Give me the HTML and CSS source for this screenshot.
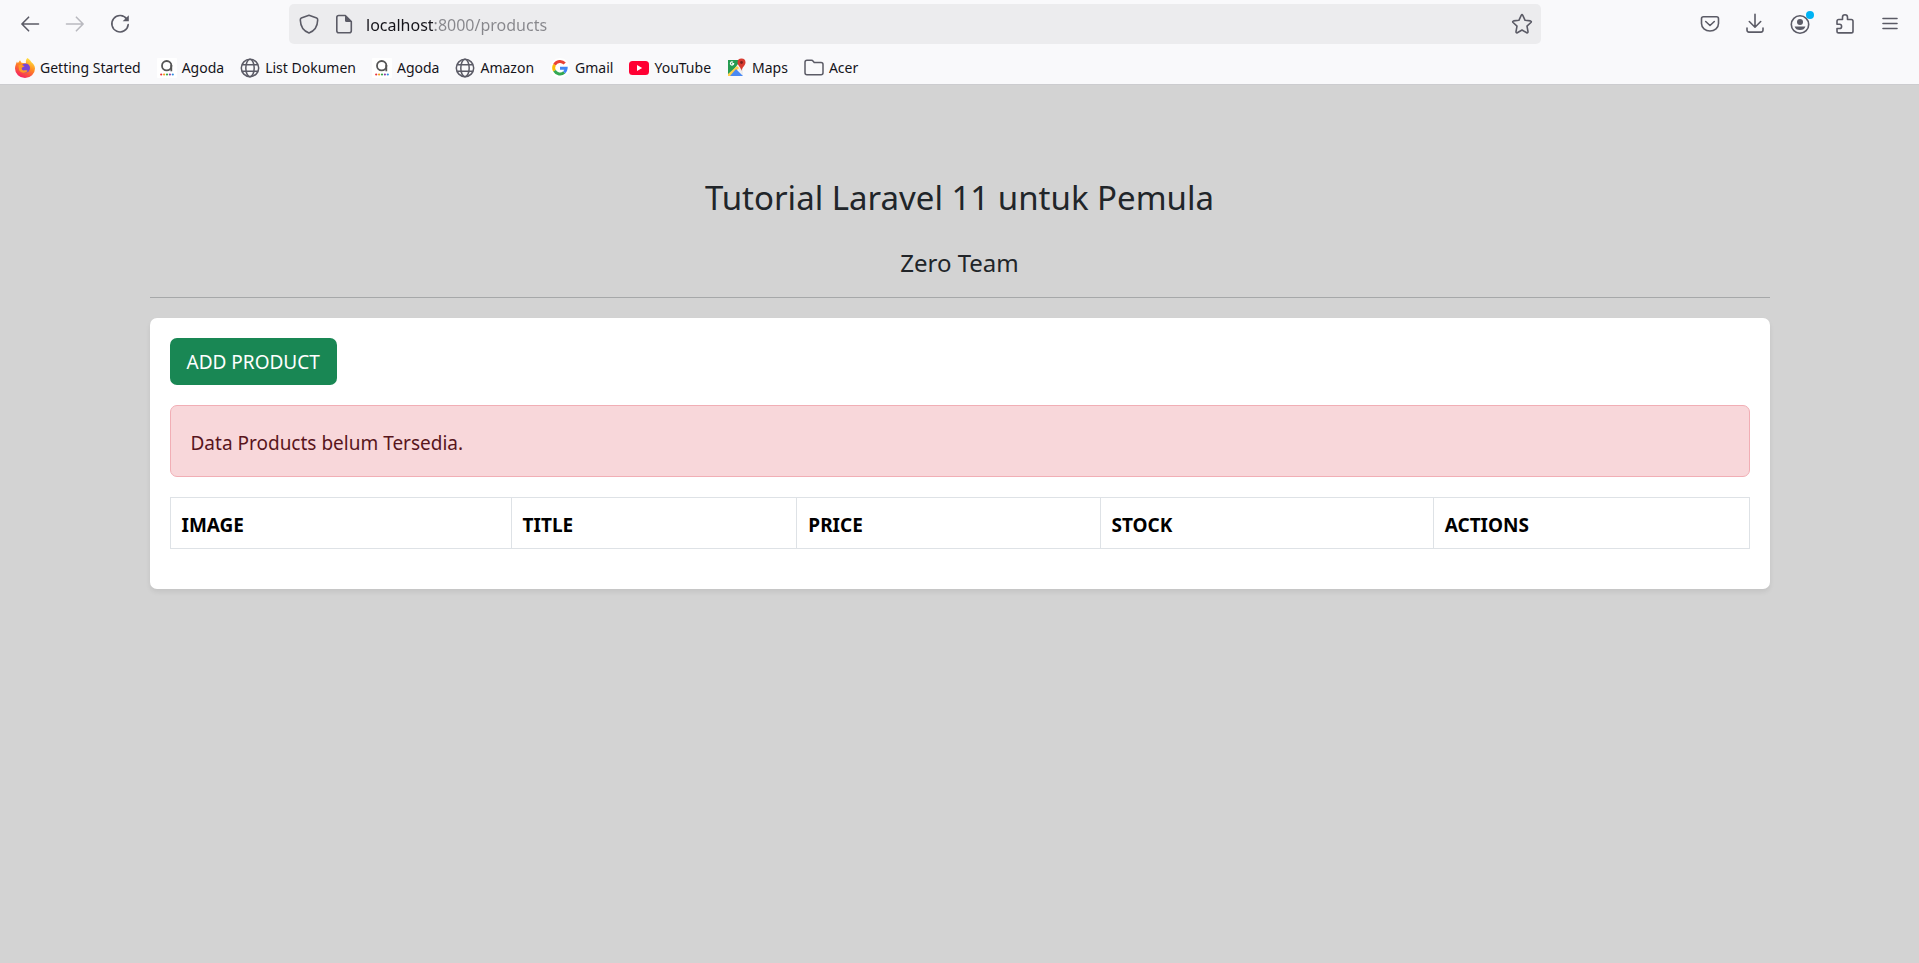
FILE: index.html
```html
<!DOCTYPE html>
<html lang="id">
<head>
<meta charset="utf-8">
<title>Data Products</title>
<link rel="stylesheet" href="styles.css">
</head>
<body>
<svg class="defs" aria-hidden="true">
  <symbol id="globe" viewBox="0 0 20 20"><g fill="none" stroke="#5b5b66" stroke-width="1.5"><circle cx="10" cy="10" r="8.7"/><ellipse cx="10" cy="10" rx="4.2" ry="8.7"/><path d="M2 6.7h16M2 13.3h16"/></g></symbol>
  <symbol id="agoda" viewBox="0 0 20 20"><rect width="20" height="20" rx="1" fill="#fff"/><circle cx="9.7" cy="7.700" r="4.7" fill="none" stroke="#555" stroke-width="1.8"/><path d="M14.300 7v6.300" stroke="#555" stroke-width="1.8"/><circle cx="4.2" cy="16.5" r="1.1" fill="#e8323c"/><circle cx="7.1" cy="16.5" r="1.1" fill="#f5a11c"/><circle cx="10" cy="16.5" r="1.1" fill="#37a84a"/><circle cx="12.9" cy="16.5" r="1.1" fill="#8b3fa5"/><circle cx="15.8" cy="16.5" r="1.1" fill="#2f8de0"/></symbol>
</svg>
<header class="chrome">
  <div class="toolbar">
    <nav class="group" aria-label="Navigation">
      <button class="tool" aria-label="Back"><svg viewBox="0 0 20 20"><path d="M18.5 10H2M8.6 3.2 1.9 10l6.7 6.8"/></svg></button>
      <button class="tool faded" aria-label="Forward"><svg viewBox="0 0 20 20"><path d="M1.5 10H18M11.4 3.2l6.7 6.8-6.7 6.8"/></svg></button>
      <button class="tool" aria-label="Reload"><svg viewBox="0 0 20 20"><path d="M16.9 5.2A8.2 8.2 0 1 0 18.2 10.6"/><path class="solid" d="M18.8 1.2v6.1h-6.1z"/></svg></button>
    </nav>
    <form class="urlbar">
      <button type="button" class="bar-icon" aria-label="Tracking protection"><svg viewBox="0 0 20 20"><path d="M10 1.3 17.7 4c1 .4 1 1 1 2C18.500 12 15.500 17 10 19 4.500 17 1.500 12 1.300 6c0-1 0-1.600 1-2z"/></svg></button>
      <button type="button" class="bar-icon" aria-label="Site information"><svg viewBox="0 0 20 20"><path d="M4.500 1.500h6.800l6 6v9.200q0 2-2 2H4.800q-2 0-2-2V3.500q0-2 2-2z"/><path class="solid" d="M11 1v5.500q0 1.500 1.500 1.500H18z"/></svg></button>
      <input class="address" type="text" aria-label="Address" value="localhost:8000/products">
      <button type="button" class="bar-icon" aria-label="Bookmark this page"><svg viewBox="0 0 20 20"><path d="M9.200 1.300q.8-1.300 1.600 0l2.300 5 5.300.6q1.500.4.5 1.600l-3.900 3.700 1 5.500q0 1.500-1.300 1L10 16l-4.700 2.700q-1.300.5-1.300-1l1-5.500L1.100 8.500q-1-1.200.5-1.600l5.300-.6z"/></svg></button>
    </form>
    <div class="group">
      <button class="tool" aria-label="Save to Pocket"><svg viewBox="0 0 20 20"><path d="M3.500 2.800h13q2 0 2 2v4.700a8.500 7.500 0 0 1-17 0V4.800q0-2 2-2z"/><path d="m5.700 7.500 4.300 4 4.300-4"/></svg></button>
      <button class="tool" aria-label="Downloads"><svg viewBox="0 0 20 20"><path d="M10 .2v12.300M4.300 7.500l5.700 5.700 5.700-5.700M2 14v2.100q0 2 2 2h12q2 0 2-2V14"/></svg></button>
      <button class="tool" aria-label="Account"><svg viewBox="0 0 20 20"><circle cx="10" cy="10.500" r="8.700"/><circle class="solid" cx="10" cy="8" r="3"/><path class="solid" d="M4.600 12.500h10.800q-1 3.500-5.400 3.500t-5.400-3.500z"/></svg><span class="dot"></span></button>
      <button class="tool" aria-label="Extensions"><svg viewBox="0 0 20 20"><path d="M3.700 5.500H7.500V3.300a2.500 2.500 0 0 1 5 0v2.200h3.800q1.700 0 1.700 1.700v10q0 1.700-1.700 1.700H3.700q-1.700 0-1.700-1.700V14.500h2.500a2 2 0 0 0 0-4.200H2V7.200q0-1.700 1.700-1.700z"/></svg></button>
      <button class="tool" aria-label="Menu"><svg viewBox="0 0 20 20"><path d="M3 4.500h14M3 9.500h14M3 14.500h14"/></svg></button>
    </div>
  </div>
  <nav class="bookmarks" aria-label="Bookmarks">
    <a href="#"><svg viewBox="0 0 20 20"><defs><linearGradient id="fox" x1=".8" y1="0" x2=".3" y2="1"><stop offset="0" stop-color="#fff044"/><stop offset=".45" stop-color="#ff8b20"/><stop offset="1" stop-color="#f51b63"/></linearGradient></defs><path fill="url(#fox)" d="M12.500 0c2.500 1.500 3 3.200 4 4.200 2 1.500 3.500 4 3.500 6.300A10 9.500 0 0 1 0 10.500C0 7.500 1.300 5.500 2 3.500l.8 1.700L5 2.300l1.500 2.500 4.500.5c-.5-2 0-4 1.500-5.300z"/><circle cx="10.500" cy="10" r="4.500" fill="#7845d5"/><path fill="#ff9926" d="M3.500 7.300c2-1 4-.6 6 1l-2.700 1.500c-.5 2 1 3 3.200 2.500 1.500-.3 2.800.2 2.500.8-2 2.500-7 1.900-8.500-1z"/></svg><span>Getting Started</span></a>
    <a href="#"><svg><use href="#agoda"/></svg><span>Agoda</span></a>
    <a href="#"><svg><use href="#globe"/></svg><span>List Dokumen</span></a>
    <a href="#"><svg><use href="#agoda"/></svg><span>Agoda</span></a>
    <a href="#"><svg><use href="#globe"/></svg><span>Amazon</span></a>
    <a href="#"><svg viewBox="0 0 20 20"><circle cx="10" cy="10" r="10" fill="#fff"/><g fill="none" stroke-width="3"><path stroke="#ea4335" d="M4.500 6.700A6.300 6.300 0 0 1 14.700 5.500"/><path stroke="#fbbc05" d="M4.500 6.700a6.300 6.300 0 0 0 0 6.100"/><path stroke="#34a853" d="M4.500 12.800a6.300 6.300 0 0 0 9.700 1.600"/><path stroke="#4285f4" d="M14.200 14.400a6.300 6.300 0 0 0 1.900-4.100H10"/></g></svg><span>Gmail</span></a>
    <a href="#"><svg viewBox="0 0 20 20"><rect y="3" width="20" height="14" rx="3.500" fill="#ff0033"/><path fill="#fff" d="m8 7 5.200 3L8 13z"/></svg><span>YouTube</span></a>
    <a href="#"><svg viewBox="0 0 20 20"><path fill="#269c51" d="M1 2h13L2 18H1z"/><path fill="#eee" d="M16 8v10L9 9z"/><path fill="#ffd04b" d="m1 16 9-8 2 2-8 8H1z"/><path fill="#4a89f3" d="m3 18 6-7 7 7z"/><path fill="none" stroke="#fff" stroke-width="1.200" d="M6 4.200a1.600 1.600 0 1 0 .6 1.500H5.200"/><path fill="#d83b30" d="M14.500.5A4 4 0 0 1 18.500 4.500C18.500 7.500 15 9 14.500 13 14 9 10.500 7.500 10.500 4.500a4 4 0 0 1 4-4z"/><circle cx="14.500" cy="4.500" r="1.400" fill="#7e1f1c"/></svg><span>Maps</span></a>
    <a href="#"><svg viewBox="0 0 20 20"><path fill="none" stroke="#5b5b66" stroke-width="1.500" d="M3 2.200h4.500q1 0 1.700 1l1 1.200H17q2 0 2 2v8.300q0 2-2 2H3q-2 0-2-2V4.200q0-2 2-2z"/></svg><span>Acer</span></a>
  </nav>
</header>
<main class="page">
  <h1 class="title">Tutorial Laravel 11 untuk Pemula</h1>
  <h2 class="subtitle">Zero Team</h2>
  <hr class="rule">
  <section class="card">
    <a class="add" href="#">ADD PRODUCT</a>
    <div class="alert" role="alert">Data Products belum Tersedia.</div>
    <table class="products">
      <colgroup><col class="c-image"><col class="c-title"><col class="c-price"><col class="c-stock"><col class="c-actions"></colgroup>
      <thead><tr><th scope="col">IMAGE</th><th scope="col">TITLE</th><th scope="col">PRICE</th><th scope="col">STOCK</th><th scope="col">ACTIONS</th></tr></thead>
    </table>
  </section>
</main>
</body>
</html>
```
FILE: styles.css
```css
* { box-sizing: border-box; }
body {
  margin: 0;
  background: #d3d3d3;
  color: #212529;
  font: 19px/30px "Noto Sans", "Open Sans", sans-serif;
}
.defs { position: absolute; width: 0; height: 0; }
button { border: 0; padding: 0; background: none; font: inherit; }

/* Browser chrome */
.chrome { background: #f9f9fb; border-bottom: 1px solid #cccccf; }
.toolbar { display: flex; align-items: center; padding: 4px 7px 0; }
.group { display: flex; }
.tool, .bar-icon { display: flex; align-items: center; justify-content: center; height: 40px; position: relative; }
.tool { width: 45px; }
.bar-icon { width: 35px; flex: none; }
.tool svg, .bar-icon svg {
  width: 20px;
  height: 20px;
  fill: none;
  stroke: #5b5b66;
  stroke-width: 1.6;
  stroke-linecap: round;
  stroke-linejoin: round;
  overflow: visible;
}
.tool .solid, .bar-icon .solid { fill: #5b5b66; stroke: none; }
.faded { opacity: .4; }
.dot { position: absolute; top: 7px; right: 8px; width: 8px; height: 8px; border-radius: 50%; background: #00b3f4; }
.urlbar {
  flex: 1;
  display: flex;
  align-items: center;
  height: 40px;
  margin: 0 146px 0 147px;
  padding: 0 2px;
  border-radius: 5px;
  background: #ececee;
}
.address {
  flex: 1;
  min-width: 0;
  height: 40px;
  padding: 2px 0 0 5px;
  border: 0;
  outline: 0;
  font: 16px/24px "Noto Sans", "Open Sans", sans-serif;
  color: transparent;
  background: linear-gradient(to right, #15141a 72px, #87878c 72px);
  -webkit-background-clip: text;
  background-clip: text;
}
.bookmarks { display: flex; gap: 16px; padding: 13px 15px 6px; }
.bookmarks a {
  display: flex;
  align-items: center;
  gap: 5px;
  color: #15141a;
  font-size: 14px;
  line-height: 20px;
  text-decoration: none;
}
.bookmarks svg { width: 20px; height: 20px; }
.bookmarks span { padding-top: 1px; }

/* Page */
.page { max-width: 1650px; margin: 0 auto; padding: 92px 15px 40px; }
.title { margin: 0 0 29px; font-size: 33px; line-height: 42px; font-weight: 400; text-align: center; }
.subtitle { margin: 0; font-size: 24px; line-height: 30px; font-weight: 400; text-align: center; }
.rule { height: 1px; margin: 19px 0 20px; border: 0; background: #a6a8a9; }
.card { padding: 20px; border-radius: 7px; background: #fff; box-shadow: 0 3px 5px rgba(0, 0, 0, .075); }
.add {
  display: block;
  width: fit-content;
  padding: 9px 17px 8px;
  border-radius: 7px;
  background: #198754;
  color: #fff;
  text-decoration: none;
}
.alert {
  margin: 20px 0;
  padding: 22px 20px 18px;
  border: 1px solid #f1aeb5;
  border-radius: 7px;
  background: #f8d7da;
  color: #58151c;
}
.products { width: 100%; margin-bottom: 20px; border-collapse: collapse; table-layout: fixed; color: #000; }
.products th { padding: 12px 11px 8px; border: 1px solid #dee2e6; text-align: left; font-weight: 700; }
.c-image { width: 21.6%; }
.c-title { width: 18.1%; }
.c-price { width: 19.2%; }
.c-stock { width: 21.1%; }
.c-actions { width: 20%; }
```
